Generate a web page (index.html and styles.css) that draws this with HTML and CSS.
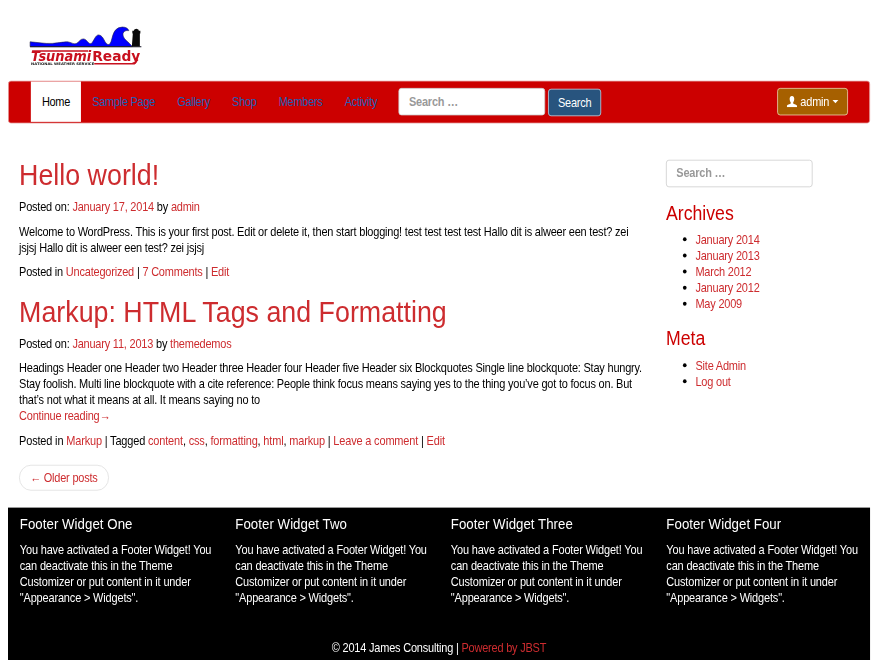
FILE: index.html
```html
<!DOCTYPE html>
<html lang="en">
<head>
<meta charset="utf-8">
<title>James Consulting</title>
<link rel="stylesheet" href="styles.css">
</head>
<body>
<div class="viewport">
<div class="page">
  <header class="masthead">
    <svg class="logo" viewBox="0 0 111 40" preserveAspectRatio="none" role="img" aria-label="TsunamiReady">
      <path d="M0 20V15.200C8 15.800 14 17.200 22 16.800C30 16.200 34 15 38 15.300C42 16 43 17.800 46 17C49 15.500 50 12.300 53 12.300C57 12.500 58 18 61 17C64 14 65 8.300 68.500 8.300C74 9 74 18 78.500 18C83 17 80 .8 92 .4C95.500 .4 98 2 98.500 4C92 3 90.500 9 96 14Q99 16.500 102 20Z" fill="#00f" stroke="#224" stroke-width=".6"/>
      <path d="M0 20.200H111" stroke="#112" stroke-width="1.100"/>
      <path d="M101.500 20L102.500 7H102V4H103.500L104 2.800L106 2L108 2.800L108.500 4H110V7H109.500V20Z" fill="#080808"/>
      <path d="M2 24.300H58M64 37.200H104L107.500 33" stroke="#c8101e" stroke-width="1.500" fill="none"/>
      <text class="logo-name logo-slant" x="1" y="34.600" textLength="60" lengthAdjust="spacingAndGlyphs">Tsunami</text>
      <text class="logo-name" x="62" y="34.600" textLength="48" lengthAdjust="spacingAndGlyphs">Ready</text>
      <text class="logo-sub" x="1" y="38.800" textLength="63" lengthAdjust="spacingAndGlyphs">NATIONAL WEATHER SERVICE</text>
    </svg>
  </header>
  <nav class="navbar">
    <ul class="menu">
      <li class="active"><a>Home</a></li>
      <li><a>Sample Page</a></li>
      <li><a>Gallery</a></li>
      <li><a>Shop</a></li>
      <li><a>Members</a></li>
      <li><a>Activity</a></li>
    </ul>
    <form class="nav-search">
      <input class="field" type="text" placeholder="Search …">
      <button class="btn btn-search" type="button">Search</button>
    </form>
    <button class="btn btn-user" type="button">
      <svg class="user" viewBox="0 0 14 14"><path d="M7 0C4.700 0 3.700 1.600 3.900 4C4 6 4.800 7 5.300 7.800V9.300C4.500 10.100 0 10.800 0 12.500V14H14V12.500C14 10.800 9.500 10.100 8.700 9.300V7.800C9.200 7 10 6 10.100 4C10.300 1.600 9.300 0 7 0Z" fill="#fff"/></svg>
      admin<span class="caret"></span>
    </button>
  </nav>
  <div class="columns">
    <main class="posts">
      <article>
        <h1><a>Hello world!</a></h1>
        <p>Posted on: <a>January 17, 2014</a> by <a>admin</a></p>
        <p>Welcome to WordPress. This is your first post. Edit or delete it, then start blogging! test test test test Hallo dit is alweer een test? zei<br>jsjsj Hallo dit is alweer een test? zei jsjsj</p>
        <p>Posted in <a>Uncategorized</a> | <a>7 Comments</a> | <a>Edit</a></p>
      </article>
      <article>
        <h1><a>Markup: HTML Tags and Formatting</a></h1>
        <p>Posted on: <a>January 11, 2013</a> by <a>themedemos</a></p>
        <p>Headings Header one Header two Header three Header four Header five Header six Blockquotes Single line blockquote: Stay hungry. Stay foolish. Multi line blockquote with a cite reference: People think focus means saying yes to the thing you’ve got to focus on. But that’s not what it means at all. It means saying no to<br><a>Continue reading→</a></p>
        <p class="tags">Posted in <a>Markup</a> | Tagged <a>content</a>, <a>css</a>, <a>formatting</a>, <a>html</a>, <a>markup</a> | <a>Leave a comment</a> | <a>Edit</a></p>
      </article>
      <div class="pager"><a>← Older posts</a></div>
    </main>
    <aside class="sidebar">
      <input class="field" type="text" placeholder="Search …">
      <h3>Archives</h3>
      <ul>
        <li><a>January 2014</a></li>
        <li><a>January 2013</a></li>
        <li><a>March 2012</a></li>
        <li><a>January 2012</a></li>
        <li><a>May 2009</a></li>
      </ul>
      <h3>Meta</h3>
      <ul>
        <li><a>Site Admin</a></li>
        <li><a>Log out</a></li>
      </ul>
    </aside>
  </div>
  <footer class="footer">
    <div class="widgets">
      <section><h4>Footer Widget One</h4><p>You have activated a Footer Widget! You can deactivate this in the Theme Customizer or put content in it under "Appearance &gt; Widgets".</p></section>
      <section><h4>Footer Widget Two</h4><p>You have activated a Footer Widget! You can deactivate this in the Theme Customizer or put content in it under "Appearance &gt; Widgets".</p></section>
      <section><h4>Footer Widget Three</h4><p>You have activated a Footer Widget! You can deactivate this in the Theme Customizer or put content in it under "Appearance &gt; Widgets".</p></section>
      <section><h4>Footer Widget Four</h4><p>You have activated a Footer Widget! You can deactivate this in the Theme Customizer or put content in it under "Appearance &gt; Widgets".</p></section>
    </div>
    <div class="credits">© 2014 James Consulting | <a>Powered by JBST</a></div>
  </footer>
</div>
</div>
</body>
</html>
```
FILE: styles.css
```css
* { box-sizing: border-box; }
body { margin: 0; background: #fff; }
.viewport { width: 880px; height: 660px; overflow: hidden; contain: strict; }

.page {
  display: flex;
  flex-direction: column;
  width: 1170px;
  height: 817.800px;
  margin-left: 8px;
  transform: scale(.7368, .807);
  transform-origin: 0 0;
  font: 14.900px/20px "Liberation Sans", Arial, sans-serif;
  letter-spacing: -.27px;
  color: #000;
}
a { color: #cd2c2f; text-decoration: none; }
p { margin: 0 0 10px; }
h1, h3, h4 { font-weight: normal; line-height: 1.1; margin: 0 0 10px; letter-spacing: 0; }
h1 { font-size: 36.400px; line-height: 39.600px; }
h3 { font-size: 24px; margin-top: 20px; color: #c00; }
h4 { font-size: 18px; letter-spacing: .05px; }

.masthead { height: 99.500px; padding: 33px 0 0 30px; flex: none; }
.logo { display: block; width: 151px; height: 49.500px; overflow: visible; letter-spacing: 0; }
.logo-name { font: bold 14px "DejaVu Sans", sans-serif; fill: #c8101e; }
.logo-slant { font-style: italic; }
.logo-sub { font: bold 3.500px "DejaVu Sans", sans-serif; fill: #111; }

.navbar {
  display: flex;
  align-items: flex-start;
  flex: none;
  height: 53.500px;
  padding: 0 29px 0 30px;
  background: #c00;
  border: 1px solid #e7a5a5;
  border-radius: 4px;
}
.menu { display: flex; list-style: none; margin: 0; padding: 0; letter-spacing: -.37px; }
.menu a { display: block; padding: 15px; color: #1c5fb8; }
.menu .active a { background: #fff; color: #000; }
.nav-search { display: flex; gap: 4px; margin: 8px 0 0 14px; }
.field {
  display: block;
  width: 199px;
  height: 34px;
  padding: 5px 12px 7px 13px;
  border: 1px solid #ccc;
  border-radius: 4px;
  background: #fff;
  font: bold 14.900px/20px "Liberation Sans", Arial, sans-serif;
  letter-spacing: -.26px;
}
.nav-search .field { padding: 6px 12px 6px 13px; }
.field::placeholder { color: #999; opacity: 1; }
.btn {
  height: 34px;
  padding: 0 12px;
  border: 1px solid #fff;
  border-radius: 4px;
  color: #fff;
  font: 14.900px/20px "Liberation Sans", Arial, sans-serif;
  letter-spacing: -.26px;
}
.btn-search { width: 72px; margin-top: 1px; background: #28547e; border-color: #b9dcee; }
.btn-user {
  display: flex;
  align-items: center;
  justify-content: center;
  gap: 4px;
  width: 96px;
  margin: 8px 0 0 auto;
  background: #a66000;
  border-color: #f0d5b5;
}
.user { width: 14px; height: 14px; }
.caret { border: 4px solid transparent; border-top-color: #fff; border-bottom: 0; }

.columns { display: flex; flex: none; height: 475.600px; padding-top: 44px; }
.posts { width: 878px; padding: 0 15px; }
article { margin-bottom: 20px; }
.tags { letter-spacing: -.22px; }
.pager a {
  display: inline-block;
  padding: 5px 14px;
  border: 1px solid #ddd;
  border-radius: 16px;
}
.sidebar { padding: 1px 15px 0; }
.sidebar ul { margin: -1px 0 11px; padding-left: 40px; }
.sidebar li::marker { font-size: 17px; }
.sidebar li { height: 20px; }

.footer { flex: 1; padding-top: 12.500px; background: #000; color: #fff; }
.widgets { display: grid; grid-template-columns: repeat(4, 1fr); letter-spacing: -.22px; }
.widgets section { padding: 0 11px 0 16px; }
.credits { margin-top: 32px; text-align: center; }
```
